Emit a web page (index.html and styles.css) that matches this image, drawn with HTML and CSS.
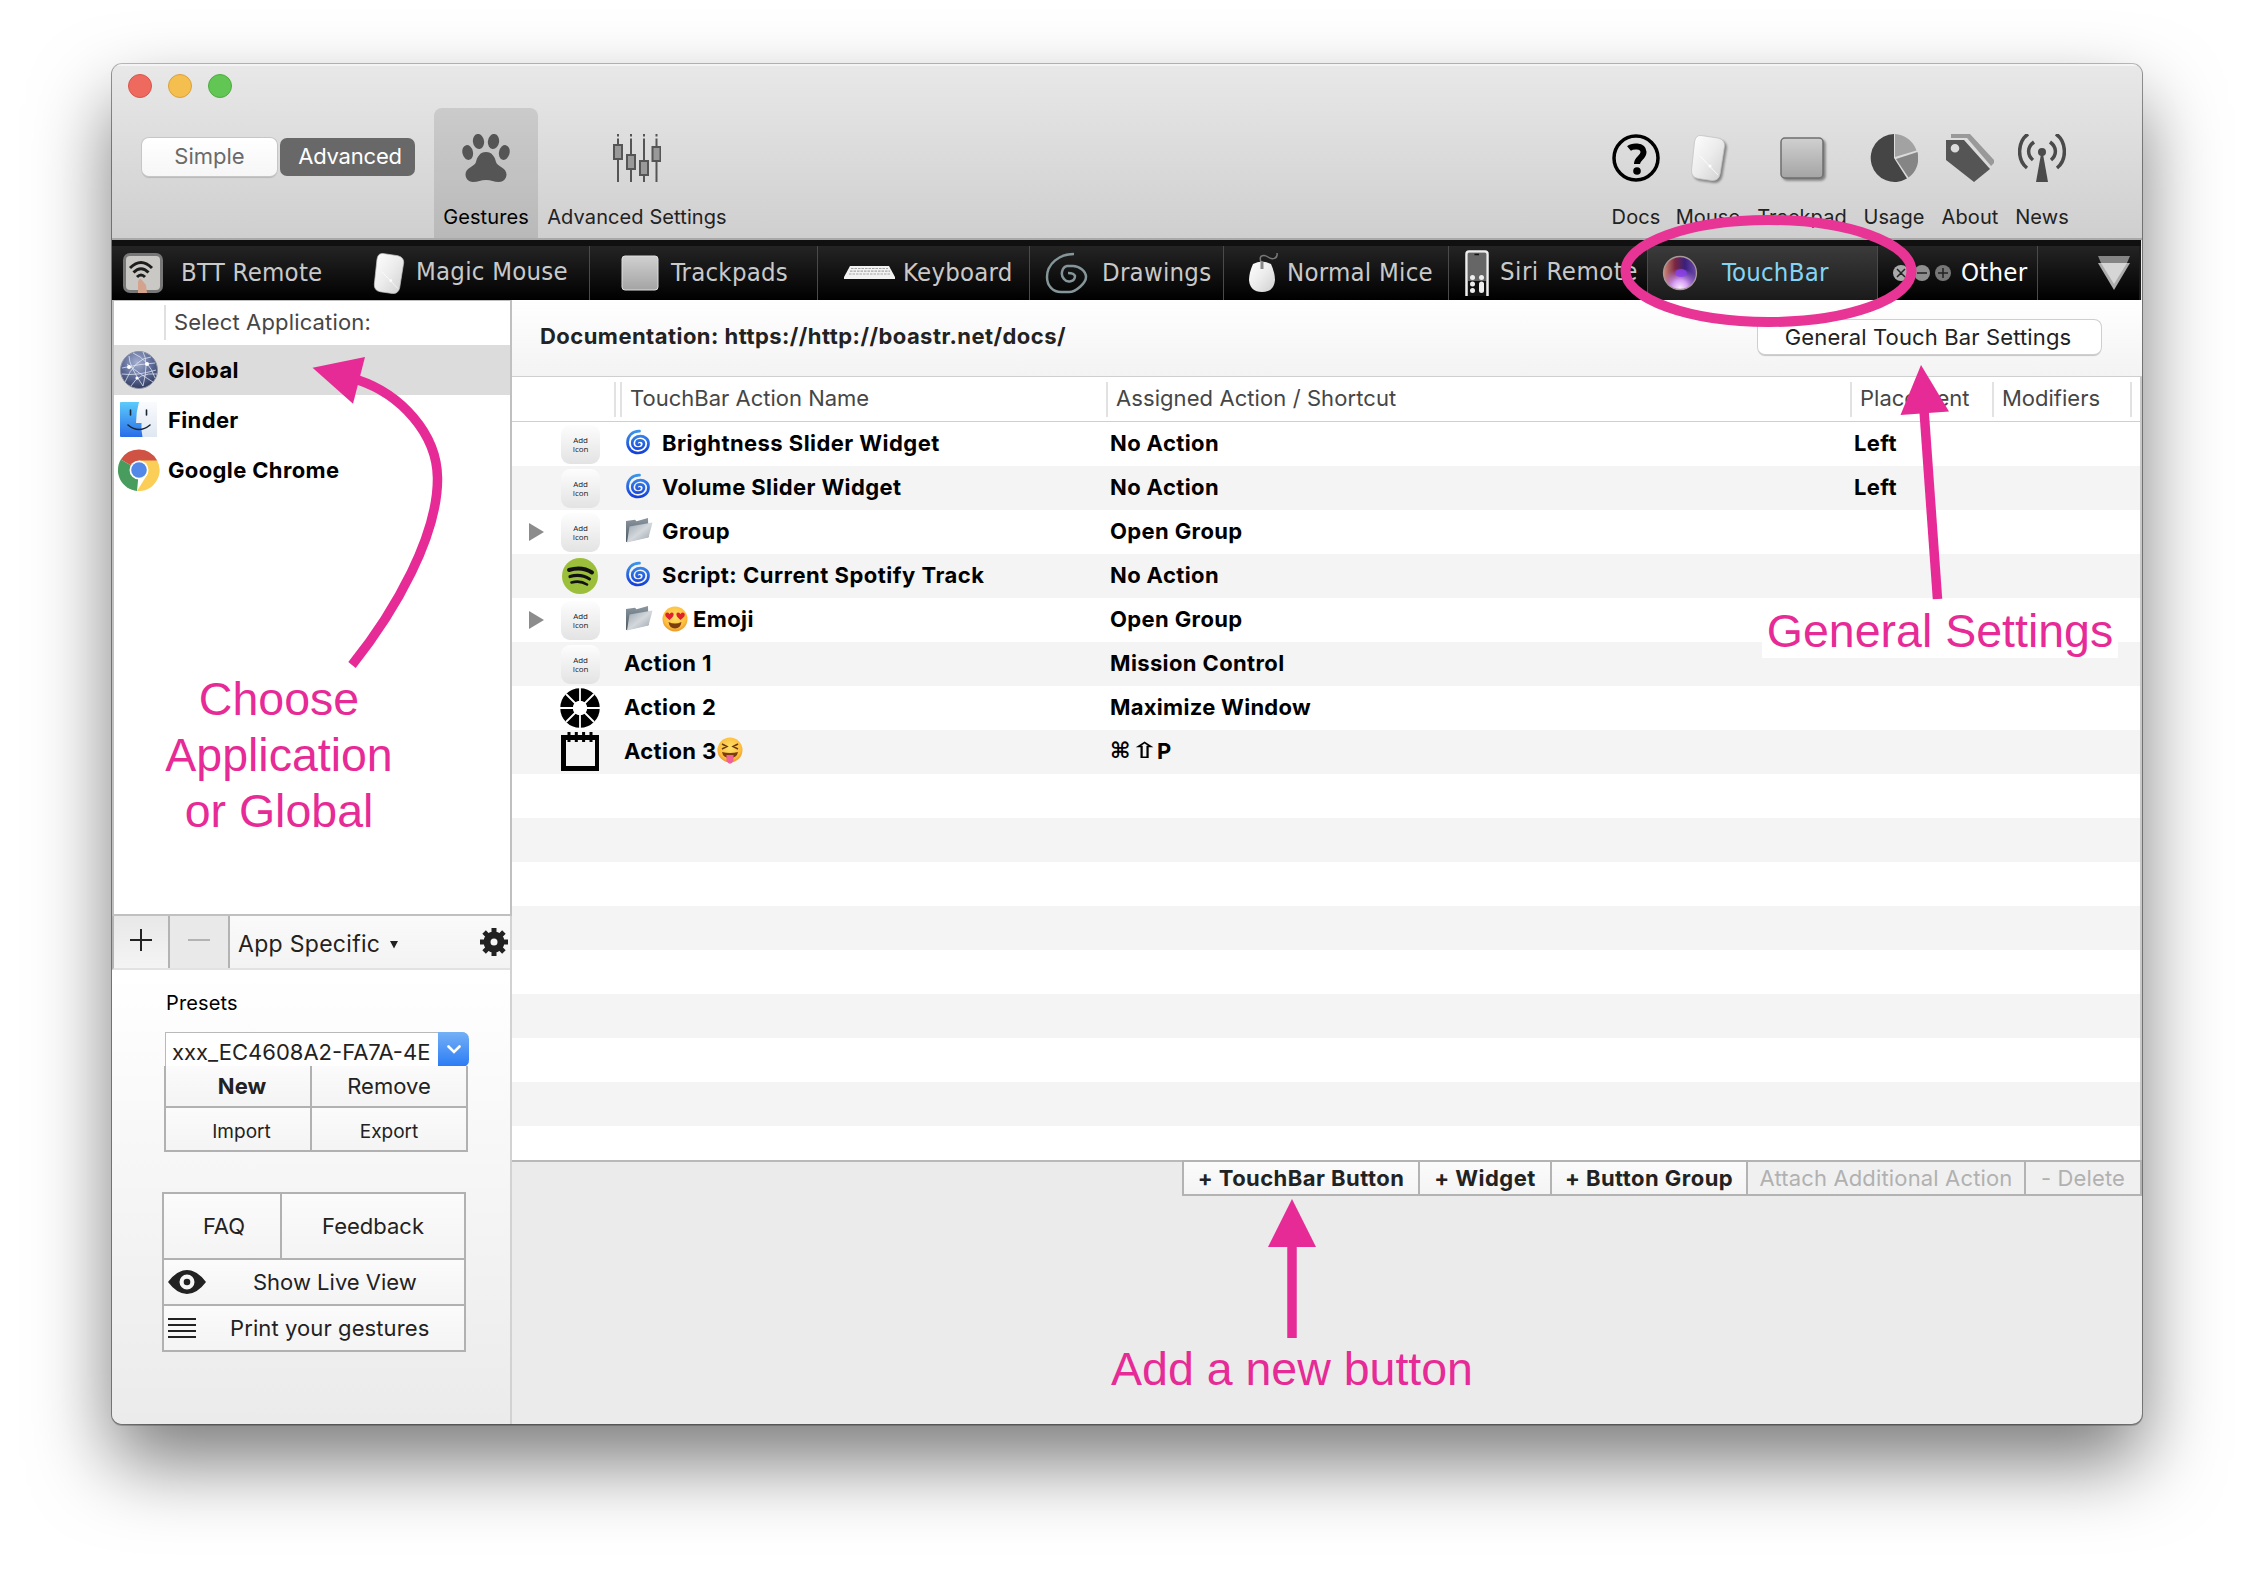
FILE: index.html
```html
<!DOCTYPE html>
<html lang="en">
<head>
<meta charset="utf-8">
<title>BetterTouchTool</title>
<link rel="stylesheet" href="styles.css">
</head>
<body>
<svg class="defs" width="0" height="0" aria-hidden="true">
  <defs>
    <linearGradient id="silver" x1="0" y1="0" x2="1" y2="1"><stop offset="0" stop-color="#fff"/><stop offset=".5" stop-color="#ececec"/><stop offset="1" stop-color="#cfcfcf"/></linearGradient>
    <linearGradient id="pad" x1="0" y1="0" x2="0" y2="1"><stop offset="0" stop-color="#d0d0d0"/><stop offset="1" stop-color="#a4a4a4"/></linearGradient>
    <linearGradient id="swirl" x1="0" y1="0" x2="0" y2="1"><stop offset="0" stop-color="#3c93ea"/><stop offset="1" stop-color="#1440dc"/></linearGradient>
    <linearGradient id="folderA" x1="0" y1="0" x2="0" y2="1"><stop offset="0" stop-color="#8b97a1"/><stop offset="1" stop-color="#4c5761"/></linearGradient>
    <linearGradient id="folderB" x1="0" y1="0" x2="1" y2="1"><stop offset="0" stop-color="#9aa4ad"/><stop offset=".5" stop-color="#d3d8dc"/><stop offset="1" stop-color="#98a1aa"/></linearGradient>
    <radialGradient id="face" cx=".5" cy=".4" r=".6"><stop offset="0" stop-color="#ffe36a"/><stop offset=".75" stop-color="#fdbd3d"/><stop offset="1" stop-color="#e8952a"/></radialGradient>
    <radialGradient id="globe" cx=".45" cy=".3" r=".75"><stop offset="0" stop-color="#a3aed0"/><stop offset=".55" stop-color="#5d6a96"/><stop offset="1" stop-color="#2c3557"/></radialGradient>
    <linearGradient id="finder" x1="0" y1="0" x2="0" y2="1"><stop offset="0" stop-color="#5ccbfb"/><stop offset="1" stop-color="#2a6de8"/></linearGradient>
    <linearGradient id="finderR" x1="0" y1="0" x2="0" y2="1"><stop offset="0" stop-color="#fafbfd"/><stop offset="1" stop-color="#dfe7f2"/></linearGradient>
    <radialGradient id="siriA" cx=".5" cy=".95" r=".6"><stop offset="0" stop-color="#fbe9ff"/><stop offset=".4" stop-color="#d49cf2"/><stop offset="1" stop-color="#b070e0" stop-opacity="0"/></radialGradient>
    <linearGradient id="siriB" x1="0" y1="0" x2="1" y2="0"><stop offset="0" stop-color="#d08a78"/><stop offset=".35" stop-color="#7a2740"/><stop offset=".65" stop-color="#3a1f7c"/><stop offset="1" stop-color="#6c4aa8"/></linearGradient>
    <symbol id="i-swirl" viewBox="0 0 24 26"><path d="M13.5 2.2C6 2 1.5 7 1.5 13.600C1.500 20 6.400 24 12 24C18 24 22.500 20 22.500 14.500C22.500 9.800 18.500 7.200 14.500 7.200C10 7.200 6.200 10 6.200 14C6.200 17.500 9 19.700 12 19.700C15.500 19.700 18 17.500 18 14.800C18 12.500 16 11.300 14 11.300C11.800 11.300 10.500 12.700 10.500 14.200C10.500 15.600 12 16.300 13.500 15.400" fill="none" stroke="url(#swirl)" stroke-width="2.700" stroke-linecap="round"/></symbol>
    <symbol id="i-folder" viewBox="0 0 28 26"><path d="M1 4L10 2.800L11.500 4.300L23 1L23.500 20L1 25Z" fill="url(#folderA)"/><path d="M4.500 9.500L27.500 5.500L23.500 20.500L2 25.500Z" fill="url(#folderB)"/></symbol>
    <symbol id="i-mouse" viewBox="0 0 36 48"><path d="M11 1.500L28 4Q35 6 34.500 12L30 40Q28.500 47 22 46.500L8 44.500Q1 43 1.500 36L4.500 8Q5.500 1 11 1.500Z" fill="url(#silver)" stroke="#c4c4c4" stroke-width=".8"/><path d="M10 22L28 41" stroke="#fff" stroke-width=".8"/><circle cx="20" cy="32" r="1.500" fill="#fff"/></symbol>
  </defs>
</svg>

<main class="window">
  <header class="toolbar">
    <div class="lights"><i class="light red"></i><i class="light yellow"></i><i class="light green"></i></div>
    <div class="tools">
      <div class="mode"><button class="seg">Simple</button><button class="seg on">Advanced</button></div>
      <div class="tool selected t-gest">
        <svg width="48" height="48" viewBox="0 0 48 48" fill="#555"><ellipse cx="16.500" cy="7.500" rx="5.600" ry="7.600" transform="rotate(-8 16.500 7.500)"/><ellipse cx="31.500" cy="7.500" rx="5.600" ry="7.600" transform="rotate(8 31.500 7.500)"/><ellipse cx="5.700" cy="18.500" rx="5.300" ry="7.500" transform="rotate(-12 5.700 18.500)"/><ellipse cx="42.300" cy="18.500" rx="5.300" ry="7.500" transform="rotate(12 42.300 18.500)"/><path d="M24 18C30 18 33 23 34 28C35.500 33 44.500 33.500 44.500 40.500C44.500 45 41 48 37 48C32 48 29 46 24 46C19 46 16 48 11 48C7 48 3.500 45 3.500 40.500C3.500 33.500 12.500 33 14 28C15 23 18 18 24 18Z"/></svg>
        <span>Gestures</span></div>
      <div class="tool t-adv">
        <svg width="48" height="48" viewBox="0 0 48 48"><g stroke="#555" stroke-width="2"><path d="M5 0V2.500M5 4.500V48M18 0V2.500M18 4.500V48M31 0V2.500M31 4.500V48M43.500 0V2.500M43.500 4.500V48"/><g fill="#999"><rect x="1" y="11" width="8" height="14"/><rect x="14" y="21" width="8" height="14"/><rect x="27" y="27" width="8" height="14"/><rect x="39.500" y="13" width="8" height="14"/></g></g></svg>
        <span>Advanced Settings</span></div>
      <div class="tool t-docs">
        <svg width="48" height="48" viewBox="0 0 48 48"><circle cx="24" cy="24" r="22" fill="none" stroke="#000" stroke-width="3.500"/><path d="M17 14.500C20 12 31 10.500 31.500 18C31.500 24 25 24 25 30" fill="none" stroke="#000" stroke-width="6"/><circle cx="25" cy="37" r="3.800"/></svg>
        <span>Docs</span></div>
      <div class="tool t-mouse"><svg class="shadowed" width="36" height="48"><use href="#i-mouse"/></svg><span>Mouse</span></div>
      <div class="tool t-track"><svg class="shadowed" width="48" height="48" viewBox="0 0 48 48"><rect x="3" y="4" width="42" height="40" rx="4" fill="url(#pad)" stroke="#6f6f6f" stroke-width="1.500"/></svg><span>Trackpad</span></div>
      <div class="tool t-usage"><svg width="48" height="48" viewBox="0 0 48 48"><path d="M24 24L37 44.600A24 24 0 1 1 24 0Z" fill="#454545"/><path d="M25 23V0A24 24 0 0 1 46.500 16.500Z" fill="#a2a2a2"/><path d="M26 25L47.500 18A24 24 0 0 1 38.500 43.500Z" fill="#858585"/></svg><span>Usage</span></div>
      <div class="tool t-about"><svg width="48" height="48" viewBox="0 0 48 48"><path d="M5 0H24L48 26V29L45 32L21 4H5Z" fill="#999"/><path fill-rule="evenodd" d="M0 6H18L44 35L28 48L0 26ZM9 10A4.300 4.300 0 1 0 9 18.600A4.300 4.300 0 1 0 9 10Z" fill="#555"/></svg><span>About</span></div>
      <div class="tool t-news"><svg width="48" height="48" viewBox="0 0 48 48"><g fill="none" stroke="#4a4a4a" stroke-width="3.500"><path d="M10 0C-1 8 -1 26 9 34M16 8C9 13 9 21 15 26M38 0C49 8 49 26 39 34M32 8C39 13 39 21 33 26"/></g><circle cx="24" cy="18" r="4" fill="#4a4a4a"/><path d="M23 20H25L30 48H18Z" fill="#4a4a4a"/></svg><span>News</span></div>
    </div>
  </header>

  <nav class="tabs">
    <div class="tab w-btt"><svg width="42" height="42" viewBox="0 0 42 42"><rect x="1" y="1" width="40" height="40" rx="7" fill="#777"/><rect x="4" y="4" width="34" height="34" rx="4" fill="#c9c8c4"/><g fill="none" stroke="#1d1d1d" stroke-width="3"><path d="M8 16Q19 5 30 16M11.500 20.500Q19 13 26.500 20.500M15 25Q19 21 23 25"/></g><path d="M16 41V30Q17 26 19 27L24 33L25 41Z" fill="#d3a38e"/></svg><span>BTT Remote</span></div>
    <div class="tab w-magic"><svg width="32" height="45"><use href="#i-mouse"/></svg><span class="up">Magic Mouse</span></div>
    <div class="tab w-track"><svg width="38" height="36" viewBox="0 0 38 36"><rect x="1" y="1" width="36" height="34" rx="3" fill="url(#pad)" stroke="#ddd"/></svg><span>Trackpads</span></div>
    <div class="tab w-key"><svg width="53" height="16" viewBox="0 0 53 16"><path d="M7 1H46L52 12V14H1V12Z" fill="#f2f2f2"/><path d="M8 3.500H45M7 6.200H47M6 9H48" stroke="#a5a5a5" stroke-width="1.200" stroke-dasharray="2.500 1"/></svg><span>Keyboard</span></div>
    <div class="tab w-draw"><svg width="43" height="42" viewBox="0 0 43 42"><path d="M29 2C14 2 2 12 2 25C2 34 8 40 16 40H24C31 40 41 31 41 25C41 19 34 14 28 14H22C17 15 15 23 19 27C22 31 30 30 30 24C29 21 26 21 23 21" fill="none" stroke="#84969a" stroke-width="2.500"/></svg><span>Drawings</span></div>
    <div class="tab w-mice"><svg width="31" height="40" viewBox="0 0 31 40"><path d="M13 9C10 1 17 2 20 4C24 7 30 6 29 0" fill="none" stroke="#777" stroke-width="1.500"/><path d="M5 11Q14 6 23 11Q27 20 27 27Q26 39 14 39Q2 39 1 27Q1 20 5 11Z" fill="url(#silver)"/><path d="M14 9V16" stroke="#888" stroke-width="3"/></svg><span>Normal Mice</span></div>
    <div class="tab w-siri"><svg width="24" height="46" viewBox="0 0 24 46"><path d="M1.500 46V4Q1.500 1.500 4 1.500H20Q22.500 1.500 22.500 4V46" fill="#111" stroke="#eee" stroke-width="2.500"/><rect x="3" y="3" width="18" height="28" fill="#666"/><path d="M9.500 4.500H14" stroke="#111" stroke-width="1.500"/><g fill="#eee"><circle cx="7.500" cy="27.500" r="2.500"/><circle cx="16.500" cy="27.500" r="2.500"/><circle cx="7.500" cy="34" r="2.500"/><circle cx="7.500" cy="40.500" r="2.500"/><rect x="14" y="31.500" width="5" height="11.500" rx="2.500"/></g></svg><span class="up">Siri Remote</span></div>
    <div class="tab w-touch active"><svg width="36" height="36" viewBox="0 0 36 36"><circle cx="18" cy="18" r="16.500" fill="url(#siriB)"/><circle cx="18" cy="18" r="16.500" fill="url(#siriA)"/><ellipse cx="19" cy="18" rx="6" ry="4" fill="#8a3ff0" opacity=".8"/><circle cx="18" cy="18" r="16.500" fill="none" stroke="#a99" stroke-width="1.300"/></svg><span>TouchBar</span></div>
    <div class="tab w-other"><svg width="62" height="18" viewBox="0 0 62 18"><circle cx="9" cy="9" r="8" fill="#aaa"/><circle cx="30" cy="9" r="8" fill="#8f8f8f"/><circle cx="51" cy="9" r="8" fill="#777"/><path d="M5 5L13 13M13 5L5 13M25 9H35M46 9H56M51 4V14" stroke="#222" stroke-width="1.500"/></svg><span>Other</span></div>
    <div class="tab w-more"><svg width="34" height="36" viewBox="0 0 34 36"><path d="M1 1H33L30 8H4Z" fill="#858585"/><path d="M1 8H33L17 35Z" fill="#adadad"/><path d="M4 8H30L17 29Z" fill="#d6d6d6"/></svg></div>
  </nav>

  <div class="body">
    <aside class="sidebar">
      <div class="apps">
        <div class="apps-head">Select Application:</div>
        <div class="app current"><svg width="40" height="40" viewBox="0 0 40 40"><circle cx="20" cy="20" r="18.500" fill="url(#globe)" stroke="#8d93a8"/><g fill="none" stroke="#e4e8f6" stroke-width="1" opacity=".75"><path d="M3 18Q20 14 36 13M10 6Q10 16 24 36M24 2Q30 12 24 36M3 24Q18 26 37 20M14 3Q30 10 36 28M6 32Q16 8 32 7M8 14Q24 26 34 32M12 36Q20 22 38 24"/></g><g fill="#fff"><circle cx="10" cy="17" r="2"/><circle cx="28" cy="14" r="2"/><circle cx="18" cy="28" r="1.600"/></g></svg><span>Global</span></div>
        <div class="app"><svg width="40" height="40" viewBox="0 0 40 40"><rect x="1" y="2" width="37" height="35" rx="1" fill="url(#finder)"/><path d="M20 2H38V37H23.500Q22 30 22.500 23H17Q17 12 20 2Z" fill="url(#finderR)"/><path d="M11.500 10V15M27.500 10V15M9 25Q20 34 31 25" fill="none" stroke="#182535" stroke-width="1.600" stroke-linecap="round"/></svg><span>Finder</span></div>
        <div class="app"><svg class="chrome" width="42" height="42" viewBox="0 0 42 42"><path d="M21 21L2.800 10.500A21 21 0 0 1 39.200 11.500Z" fill="#cf5244"/><path d="M21 21L19 42A21 21 0 0 1 2.800 10.500Z" fill="#489d5e"/><path d="M21 21L21 11.500H39.200A21 21 0 0 1 19 42L29 26Z" fill="#fbcf57"/><circle cx="21" cy="21" r="9.500" fill="#fff"/><circle cx="21" cy="21" r="7.800" fill="#5289e8"/></svg><span>Google Chrome</span></div>
      </div>
      <div class="app-bar">
        <button class="sq plus"><svg width="22" height="22" viewBox="0 0 22 22"><path d="M11 0V22M0 11H22" stroke="#222" stroke-width="2"/></svg></button>
        <button class="sq minus"><svg width="22" height="22" viewBox="0 0 22 22"><path d="M0 11H22" stroke="#b3b3b3" stroke-width="2"/></svg></button>
        <div class="specific"><span>App Specific</span><svg width="8" height="8" viewBox="0 0 8 8"><path d="M0 0H8L4 7.500Z" fill="#222"/></svg></div>
        <svg class="gear" width="28" height="28" viewBox="-14 -14 28 28"><g fill="none" stroke="#222"><circle r="7" stroke-width="7"/><path d="M0-14V-9M0 14V9M-14 0H-9M14 0H9M-9.900-9.900L-6.500-6.500M9.900 9.900L6.500 6.500M-9.900 9.900L-6.500 6.500M9.900-9.900L6.500-6.500" stroke-width="5"/></g></svg>
      </div>
      <div class="presets">
        <div class="label">Presets</div>
        <div class="combo"><span>xxx_EC4608A2-FA7A-4E</span><b><svg width="14" height="9" viewBox="0 0 14 9"><path d="M1.500 1.500L7 7L12.500 1.500" fill="none" stroke="#fff" stroke-width="2.600" stroke-linecap="round"/></svg></b></div>
        <div class="grid presets-grid">
          <button class="strong">New</button><button>Remove</button>
          <button class="small first">Import</button><button class="small">Export</button>
        </div>
        <div class="grid help-grid">
          <button class="faq">FAQ</button><button>Feedback</button>
          <button class="wide live"><svg width="38" height="24" viewBox="0 0 38 24"><path fill-rule="evenodd" d="M0 12Q9 0 19 0Q29 0 38 12Q29 24 19 24Q9 24 0 12ZM19 4.500A7.500 7.500 0 1 0 19 19.500A7.500 7.500 0 1 0 19 4.500Z" fill="#222"/><circle cx="19" cy="12" r="3.300" fill="#222"/></svg><span>Show Live View</span></button>
          <button class="wide print"><svg width="28" height="20" viewBox="0 0 28 20"><path d="M0 1H28M0 7H28M0 13H28M0 19H28" stroke="#222" stroke-width="2"/></svg><span>Print your gestures</span></button>
        </div>
      </div>
    </aside>

    <section class="content">
      <div class="doc-bar"><strong>Documentation: https://http://boastr.net/docs/</strong><button class="push">General Touch Bar Settings</button></div>
      <div class="table">
        <div class="row head"><span class="c-gap"></span><span class="c-thin"></span><span class="c-name">TouchBar Action Name</span><span class="c-act">Assigned Action / Shortcut</span><span class="c-place">Placement</span><span class="c-mod">Modifiers</span></div>
        <div class="row"><div class="ico"><span class="add">Add<br>Icon</span></div><div class="name"><svg class="em" width="24" height="26"><use href="#i-swirl"/></svg><span class="bright">Brightness Slider Widget</span></div><div class="act">No Action</div><div class="place">Left</div></div>
        <div class="row"><div class="ico"><span class="add">Add<br>Icon</span></div><div class="name"><svg class="em" width="24" height="26"><use href="#i-swirl"/></svg><span>Volume Slider Widget</span></div><div class="act">No Action</div><div class="place">Left</div></div>
        <div class="row"><div class="ico"><i class="disc"></i><span class="add">Add<br>Icon</span></div><div class="name"><svg class="em f" width="28" height="26"><use href="#i-folder"/></svg><span>Group</span></div><div class="act">Open Group</div></div>
        <div class="row"><div class="ico"><svg width="40" height="40" viewBox="0 0 40 40"><circle cx="20" cy="20" r="18" fill="#9bbf3b"/><g fill="none" stroke="#111" stroke-linecap="round"><path d="M9 14Q22 10 32 16.500" stroke-width="4"/><path d="M10 20.500Q21 17.500 29.500 23" stroke-width="3.200"/><path d="M11.500 26.500Q20 24 27 28.500" stroke-width="2.600"/></g></svg></div><div class="name"><svg class="em" width="24" height="26"><use href="#i-swirl"/></svg><span class="script">Script: Current Spotify Track</span></div><div class="act">No Action</div></div>
        <div class="row"><div class="ico"><i class="disc"></i><span class="add">Add<br>Icon</span></div><div class="name"><svg class="em f" width="28" height="26"><use href="#i-folder"/></svg><svg class="love" width="26" height="26" viewBox="0 0 26 26"><circle cx="13" cy="13" r="12.500" fill="url(#face)"/><path d="M7.500 14Q2 10 3.500 7.500Q5.500 5.500 7.500 8Q10 5.500 11.500 7.500Q12.500 10 7.500 14ZM18.500 14Q13.500 10 14.500 7.500Q16 5.500 18.500 8Q20.500 5.500 22.500 7.500Q24 10 18.500 14Z" fill="#e0202c"/><path d="M6.500 16Q13 19 19.500 16Q18.500 22.500 13 22.500Q7.500 22.500 6.500 16Z" fill="#7b3d10"/></svg><span>Emoji</span></div><div class="act">Open Group</div></div>
        <div class="row"><div class="ico"><span class="add">Add<br>Icon</span></div><div class="name">Action 1</div><div class="act">Mission Control</div></div>
        <div class="row"><div class="ico"><svg width="40" height="40" viewBox="-20 -20 40 40"><circle r="13.500" fill="none" stroke="#000" stroke-width="12.500"/><path d="M0-20V-6M0 6V20M-20 0H-6M6 0H20M-14-14L-4-4M14 14L4 4M-14 14L-4 4M14-14L4-4" stroke="#fff" stroke-width="1.800"/></svg></div><div class="name">Action 2</div><div class="act max">Maximize Window</div></div>
        <div class="row"><div class="ico"><svg width="40" height="40" viewBox="0 0 40 40"><path fill-rule="evenodd" d="M1 3H39V39H1ZM6 8V34H35V8Z"/><path d="M9 0V10M16.300 0V10M23.600 0V10M31 0V10" stroke="#000" stroke-width="3"/></svg></div><div class="name"><span>Action 3</span><svg class="tongue" width="26" height="28" viewBox="0 0 26 28"><circle cx="13" cy="13" r="12.500" fill="url(#face)"/><path d="M5 7L10 9.500L5 12M21 7L16 9.500L21 12" fill="none" stroke="#6b3b10" stroke-width="1.500"/><path d="M5 15Q13 17 21 15Q20 21 13 21Q6 21 5 15Z" fill="#7b3d10"/><path d="M9.500 18H16.500V24Q13 29.500 9.500 24Z" fill="#f2609a"/></svg></div><div class="act keys"><i>⌘</i><i class="shift">⇧</i><span>P</span></div></div>
        <div class="row"></div><div class="row"></div><div class="row"></div><div class="row"></div><div class="row"></div><div class="row"></div><div class="row"></div><div class="row"></div><div class="row"></div>
      </div>
      <div class="actions"><button class="a1">+ TouchBar Button</button><button class="a2">+ Widget</button><button class="a3">+ Button Group</button><button class="a4 off">Attach Additional Action</button><button class="a5 off">- Delete</button></div>
    </section>
  </div>
</main>

<div class="notes">
  <svg width="2254" height="1584" viewBox="0 0 2254 1584">
    <ellipse cx="1768.500" cy="271" rx="143" ry="51" fill="none" stroke="#e83495" stroke-width="10"/>
    <g fill="#e72b96"><path d="M312.500 367.700L365 357L353 403.700Z"/><path d="M1921 365L1949 411.500L1900.500 415Z"/><path d="M1292 1199L1316 1247H1268Z"/></g>
    <g fill="none" stroke="#e72b96" stroke-width="9.500"><path d="M358 380C400 394 437 433 437.500 478C438 535 396 610 352 665"/><path d="M1924 410L1937.500 599"/><path d="M1292 1245V1338"/></g>
  </svg>
  <p class="note choose">Choose<br>Application<br>or Global</p>
  <p class="note general">General Settings</p>
  <p class="note addnew">Add a new button</p>
</div>
</body>
</html>
```
FILE: styles.css
```css
* { box-sizing: border-box; }

body {
  margin: 0;
  width: 2254px;
  height: 1584px;
  padding: 64px 112px 160px;
  position: relative;
  overflow: hidden;
  background: #fff;
  color: #222;
  font-family: Inter, "Liberation Sans", sans-serif;
  font-size: 22px;
}

svg { display: block; flex: none; }
.defs { position: absolute; }

button {
  margin: 0;
  padding: 0;
  border: 0;
  font: inherit;
  letter-spacing: inherit;
  color: inherit;
  background: linear-gradient(#fbfbfb, #f4f4f4);
}

.window {
  width: 2030px;
  height: 1360px;
  display: flex;
  flex-direction: column;
  border-radius: 10px;
  overflow: hidden;
  background: #ebebeb;
  box-shadow: 0 0 0 1px rgba(0, 0, 0, .25), 0 1px 0 1px rgba(0, 0, 0, .2), 0 38px 78px rgba(0, 0, 0, .52);
}

/* Title bar and toolbar */
.toolbar {
  height: 176px;
  flex: none;
  background: linear-gradient(#e8e8e8, #cfcfcf);
  border-top: 2px solid #f4f4f4;
  border-bottom: 2px solid #a9a9a9;
}
.lights { display: flex; gap: 16px; height: 42px; padding: 8px 0 0 16px; }
.light { width: 24px; height: 24px; border-radius: 50%; border: 1px solid; }
.red { background: #ee6a5f; border-color: #d8544a; }
.yellow { background: #f5bf4f; border-color: #d9a13c; }
.green { background: #61c654; border-color: #4eab3f; }

.tools { display: flex; height: 130px; }
.mode { display: flex; gap: 3px; width: 303px; padding: 30px 0 0 30px; margin-right: 19px; }
.mode .seg {
  width: 135px;
  height: 38px;
  border-radius: 7px;
  background: linear-gradient(#fff, #f6f6f6);
  box-shadow: 0 0 0 1px #c6c6c6, 0 2px 1px rgba(0, 0, 0, .15);
  color: #6a6a6a;
  line-height: 36px;
  padding-bottom: 2px;
}
.mode .on { background: #686868; box-shadow: none; color: #fff; padding-left: 5px; letter-spacing: -.2px; }
.tool {
  display: flex;
  flex-direction: column;
  align-items: center;
  padding-top: 26px;
  font-size: 20px;
  line-height: 24px;
  white-space: nowrap;
}
.tool span { margin-top: 23px; letter-spacing: .1px; }
.selected { background: rgba(0, 0, 0, .1); border-radius: 8px 8px 0 0; color: #000; }
.shadowed { filter: drop-shadow(2px 2px 1px rgba(0, 0, 0, .4)); }
.t-gest { width: 104px; }
.t-adv { width: 198px; }
.t-docs { width: 64px; margin-left: auto; }
.t-mouse { width: 80px; }
.t-track { width: 108px; }
.t-usage { width: 76px; }
.t-about { width: 76px; }
.t-news { width: 68px; margin-right: 66px; }

/* Device tabs */
.tabs {
  display: flex;
  height: 60px;
  flex: none;
  width: 2029px;
  padding-top: 6px;
  background: #101010;
  color: #c9c9c9;
  font-family: "DejaVu Sans Condensed", "DejaVu Sans", sans-serif;
  font-stretch: condensed;
  font-size: 25.500px;
  letter-spacing: .25px;
  line-height: 52px;
}
.tab {
  display: flex;
  align-items: center;
  background: linear-gradient(#242424, #000);
  border-right: 1px solid #4a4a4a;
  white-space: nowrap;
}
.tab span { padding-bottom: 2px; }
.tab .up { padding-bottom: 4px; }
.w-btt { width: 237px; padding-left: 10px; gap: 17px; border-right: 0; }
.w-magic { width: 241px; padding-left: 24px; gap: 11px; }
.w-track { width: 228px; padding-left: 31px; gap: 12px; }
.w-key { width: 212px; padding-left: 25px; gap: 7px; }
.w-draw { width: 194px; padding-left: 15px; gap: 14px; }
.w-mice { width: 225px; padding-left: 24px; gap: 8px; }
.w-siri { width: 199px; padding-left: 16px; gap: 11px; }
.w-siri span { letter-spacing: .5px; }
.w-touch { width: 230px; padding-left: 14px; gap: 24px; }
.w-touch.active { background: linear-gradient(#3b3b3b, #1a1a1a); color: #86d4f4; }
.w-other { width: 160px; padding-left: 14px; gap: 7px; color: #fff; }
.w-more { flex: 1; padding-left: 59px; border-right: 2px solid #1c1c1c; }

/* Columns below the tabs */
.body { display: flex; flex: 1; min-height: 0; }

.sidebar {
  width: 400px;
  display: flex;
  flex-direction: column;
  background: linear-gradient(#fff 60%, #ebebeb 100%);
  border-right: 2px solid #d2d2d2;
}
.apps {
  height: 616px;
  flex: none;
  background: #fff;
  border: solid #c0c0c0;
  border-width: 1px 0 2px 2px;
  margin-right: -2px;
  border-right: 2px solid #c0c0c0;
}
.apps-head {
  height: 44px;
  padding-left: 60px;
  line-height: 42px;
  letter-spacing: .15px;
  color: #464646;
  background: linear-gradient(#e0e0e0, #e0e0e0) 50px 4px / 2px 35px no-repeat;
}
.app {
  display: flex;
  align-items: center;
  gap: 9px;
  height: 50px;
  padding-left: 5px;
  color: #000;
  font-weight: 700;
  letter-spacing: .36px;
}
.app .chrome { margin: 0 -1px 0 -1px; }
.current { background: #dcdcdc; }
.app-bar {
  display: flex;
  height: 54px;
  flex: none;
  align-items: stretch;
  border-left: 2px solid #b5b5b5;
  border-bottom: 2px solid #e2e2e2;
  background: linear-gradient(#fafafa, #f3f3f3);
}
.sq { width: 56px; border-right: 2px solid #b3b3b3; padding: 0 0 4px 16px; background: linear-gradient(#e8e8e8, #f4f4f4); }
.minus { width: 60px; padding-left: 18px; background: #e9e9e9; }
.specific { display: flex; align-items: center; gap: 10px; width: 182px; padding: 3px 0 0 8px; font-size: 23px; letter-spacing: .3px; }
.specific svg { margin-top: 3px; }
.gear { margin: 12px 0 0 68px; }

.presets { display: flex; flex-direction: column; padding: 21px 0 0 50px; }
.label { height: 24px; margin-left: 4px; font-size: 20px; line-height: 24px; letter-spacing: .15px; color: #000; }
.combo {
  display: flex;
  width: 304px;
  height: 35px;
  margin: 17px 0 0 3px;
  background: #fff;
  border: 1px solid #b9b9b9;
  border-right: 0;
  border-bottom-color: #8d8d8d;
  border-radius: 0 7px 7px 0;
  line-height: 38px;
  white-space: nowrap;
}
.combo span { width: 272px; padding-left: 6px; }
.combo b {
  display: flex;
  align-items: center;
  justify-content: center;
  width: 31px;
  margin: -1px 0;
  border-radius: 0 7px 7px 0;
  background: linear-gradient(#74b0f6, #2b7bf5);
}
.grid { display: grid; gap: 2px; padding: 2px; background: #b1b1b1; }
.presets-grid { width: 304px; height: 86px; margin: -1px 0 0 2px; grid-template: 40px 1fr / 144px 1fr; padding-top: 0; }
.strong { font-weight: 700; padding-left: 8px; }
.grid .small { font-size: 19px; padding-top: 5px; }
.grid .first { padding-left: 7px; }
.help-grid { width: 304px; height: 160px; margin-top: 40px; grid-template: 64px 44px 1fr / 116px 1fr; }
.faq { padding-left: 4px; }
.wide { grid-column: span 2; display: flex; align-items: center; padding-left: 4px; }
.live { gap: 47px; }
.print { gap: 34px; letter-spacing: .1px; }

/* Action list */
.content { flex: 1; display: flex; flex-direction: column; }
.doc-bar {
  display: flex;
  justify-content: space-between;
  height: 77px;
  padding: 20px 41px 0 28px;
  background: linear-gradient(#fff, #f3f3f3);
  border-bottom: 1px solid #cfcfcf;
}
.doc-bar strong { line-height: 33px; letter-spacing: .46px; }
.push {
  width: 343px;
  height: 34px;
  border-radius: 7px;
  background: #fff;
  box-shadow: 0 0 0 1px #cfcfcf, 0 2px 1px rgba(0, 0, 0, .2);
  line-height: 33px;
  padding: 1px 3px 0 0;
  letter-spacing: .13px;
}
.table { height: 785px; overflow: hidden; background: #fff; border-bottom: 2px solid #b9b9b9; border-right: 2px solid #c8c8c8; }
.row { display: flex; height: 44px; align-items: center; color: #000; font-weight: 700; line-height: 42px; letter-spacing: .38px; }
.row:nth-child(odd) { background: #f4f4f4; }
.row.head { height: 45px; background: #fff; border-bottom: 1px solid #cfcfcf; color: #464646; font-weight: 400; letter-spacing: 0; }
.head span { height: 35px; line-height: 33px; border-right: 2px solid #e2e2e2; }
.c-gap { width: 104px; }
.c-thin { width: 6px; }
.c-name { width: 486px; padding-left: 8px; }
.head .c-act { width: 744px; padding-left: 8px; letter-spacing: .08px; }
.c-place { width: 142px; padding-left: 8px; }
.c-mod { width: 138px; padding-left: 8px; }
.ico { width: 112px; display: flex; justify-content: flex-end; align-items: center; padding-right: 24px; }
.add {
  width: 39px;
  height: 39px;
  padding-top: 10px;
  border-radius: 9px;
  background: linear-gradient(#fdfdfd, #e3e3e3);
  color: #222;
  font: 400 8px/9px "Open Sans", sans-serif;
  letter-spacing: -.1px;
  text-align: center;
}
.disc { border: solid transparent; border-width: 9px 0 9px 15px; border-left-color: #8c8c8c; margin-right: 17px; }
.name, .act, .place { height: 44px; }
.name { width: 486px; display: flex; align-items: center; padding-bottom: 3px; }
.em { margin: -2px 12px 0 2px; }
.em.f { margin: -2px 9px 0 1px; }
.bright { letter-spacing: .44px; }
.script { letter-spacing: .5px; }
.love { margin: 0 5px 0 0; }
.tongue { margin: 0; }
.act { width: 745px; }
.max { letter-spacing: .28px; }
.place { margin-left: -1px; }
.keys { display: flex; }
.keys i { width: 22px; font: 700 22px/42px "DejaVu Sans", sans-serif; letter-spacing: 0; }
.keys .shift { width: 25px; text-align: center; transform: scaleX(1.5); }
.actions {
  display: flex;
  align-self: flex-end;
  height: 36px;
  margin-top: -2px;
  gap: 2px;
  padding: 2px;
  background: #b3b3b3;
  font-weight: 700;
  letter-spacing: .45px;
}
.a1 { width: 234px; }
.a2 { width: 130px; }
.a3 { width: 194px; }
.a4 { width: 276px; }
.a5 { width: 114px; }
.actions .off { font-weight: 400; letter-spacing: .15px; color: #b1b1b1; background: #f0f0f0; }

/* Annotations drawn over the window */
.notes { position: absolute; inset: 0; }
.note {
  position: absolute;
  margin: 0;
  color: #e72b96;
  font: 46.500px/56px "Liberation Sans", Arial, sans-serif;
  text-align: center;
  white-space: nowrap;
}
.choose { left: 129px; top: 671px; width: 300px; }
.general { left: 1762px; top: 607px; width: 356px; height: 51px; line-height: 49px; background: #fff; }
.addnew { left: 1092px; top: 1341px; width: 400px; }
```
